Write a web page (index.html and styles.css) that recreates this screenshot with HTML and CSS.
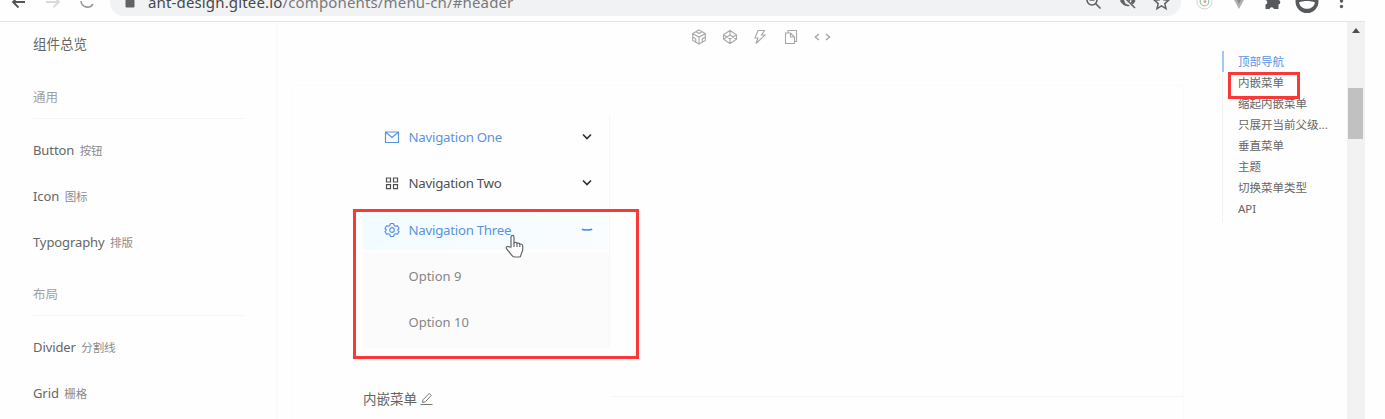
FILE: index.html
```html
<!DOCTYPE html>
<html lang="zh-CN">
<head>
<meta charset="utf-8">
<title>Menu - Ant Design</title>
<link rel="stylesheet" href="styles.css">
</head>
<body>
<div class="window">
  <header class="toolbar">
    <svg class="nav-icons" width="110" height="21" viewBox="0 0 110 21" fill="none">
      <path d="M25 2H13M19 -4l-6 6 5.500 5.500" stroke="#555" stroke-width="1.800"/>
      <path d="M46 2h12M53 -4l6 6-5.500 5" stroke="#d9dadb" stroke-width="1.800"/>
      <path d="M81 1a6.500 6.500 0 0 0 12 3" stroke="#999" stroke-width="1.600"/>
    </svg>
    <div class="address">
      <svg class="lock" width="10" height="21" viewBox="0 0 10 21"><rect x="0.500" y="-2" width="9" height="9.500" rx="1" fill="#606266"/></svg>
      <span class="url"><span class="host">ant-design.gitee.io</span>/components/menu-cn/#header</span>
      <svg class="address-icons" width="90" height="21" viewBox="0 0 90 21" fill="none" stroke="#606266">
        <circle cx="9" cy="0" r="5" stroke-width="1.600"/><path d="M12.500 3.500l5 5M6.500 0h5" stroke-width="1.700"/>
        <path d="M37 1c4-6 12-6 15.500 0-3.500 7-11.500 7-15.500 0z" fill="#606266" stroke="none"/><circle cx="45" cy="1" r="2.800" stroke="#f1f2f4" stroke-width="1.200"/><path d="M38 -5l13 13" stroke="#f1f2f4" stroke-width="3"/><path d="M38 -6l14 14" stroke-width="1.500"/>
        <path d="M78.500 -5l2.100 4.700 5 .5-3.800 3.400 1.200 5-4.500-2.700L74 8.600l1.200-5-3.800-3.400 5-.5z" stroke-width="1.500"/>
      </svg>
    </div>
    <svg class="extensions" width="172" height="21" viewBox="0 0 172 21" fill="none">
      <circle cx="23.500" cy="1.500" r="7.500" stroke="#cfd8d3"/><circle cx="23.500" cy="1.500" r="4.300" stroke="#a9c9b4" stroke-width="1.300"/><circle cx="24" cy="1.500" r="1.500" fill="#d7b0a3"/>
      <path d="M52 -2h12l-6 11z" fill="#b0b0b0"/><path d="M55 -2h6l-3 6z" fill="#888"/>
      <path d="M84.500 -3h13v3a2.300 2.300 0 0 1 0 4.500V9h-4.500a2.300 2.300 0 0 0-4.500 0h-4V4.500a2.300 2.300 0 0 0 0-4.500z" fill="#58595c"/>
      <circle cx="126" cy="1.500" r="11.500" fill="#58595c"/><path d="M118 2.500c4-2 12-2 16 0-1 4.500-4.500 6.300-8 6.300s-7-1.800-8-6.300z" fill="#fff"/>
      <circle cx="160.500" cy="1" r="1.700" fill="#58595c"/><circle cx="160.500" cy="6.500" r="1.700" fill="#58595c"/>
    </svg>
  </header>

  <div class="page">
    <aside class="sidebar">
      <div class="overview">组件总览</div>
      <div class="group">通用</div>
      <div class="item">Button<small>按钮</small></div>
      <div class="item">Icon<small>图标</small></div>
      <div class="item">Typography<small>排版</small></div>
      <div class="group group-second">布局</div>
      <div class="item">Divider<small>分割线</small></div>
      <div class="item">Grid<small>栅格</small></div>
    </aside>

    <main class="content">
      <div class="demo-actions">
        <svg width="16" height="16" viewBox="0 0 16 16"><path d="M8 1l6.300 3.500v7L8 15l-6.300-3.500v-7zM2 4.700L8 8l6-3.300M8 8v7M5 2.700L8 4.500l3-1.800M1.700 8l3 1.800V13M14.300 8l-3 1.800V13"/></svg>
        <svg width="16" height="16" viewBox="0 0 16 16"><path d="M8 1.500l6.500 4.300v4.400L8 14.500l-6.500-4.300V5.800zM1.500 5.800L8 10l6.500-4.200M1.500 10.200L8 6l6.500 4.200M8 1.500V6M8 10v4.500"/></svg>
        <svg width="16" height="16" viewBox="0 0 16 16"><path d="M6 1.500h6.500L9.500 6H13L4 14.500 6 9H3z"/></svg>
        <svg width="16" height="16" viewBox="0 0 16 16"><path d="M5 4V1.500h8.500v11h-2.300M2.500 4h5l4 4v6.500h-9zM7.500 4v4h4"/></svg>
        <svg width="18" height="16" viewBox="0 0 18 16"><path d="M5.800 5L2.300 8l3.500 3M13 5l3.500 3-3.500 3" stroke-width="1.500"/></svg>
      </div>

      <section class="demo">
        <nav class="menu">
          <div class="menu-title active">
            <svg width="16" height="16" viewBox="0 0 16 16"><path d="M1.500 3h13v10.500h-13zM2 3.500l6 5 6-5"/></svg>
            <span>Navigation One</span>
            <svg class="arrow" width="12" height="12" viewBox="0 0 12 12"><path d="M2 3.500l4 4 4-4"/></svg>
          </div>
          <div class="menu-title">
            <svg width="16" height="16" viewBox="0 0 16 16"><path d="M2.500 3h4v4h-4zM9.500 3h4v4h-4zM2.500 9.700h4v4h-4zM9.500 9.700h4v4h-4z"/></svg>
            <span>Navigation Two</span>
            <svg class="arrow" width="12" height="12" viewBox="0 0 12 12"><path d="M2 3.500l4 4 4-4"/></svg>
          </div>
          <div class="menu-title active hovered">
            <svg width="16" height="16" viewBox="0 0 16 16"><path d="M6.500 1.500h3l.7 2 1.300.7 2-.4 1.500 2.600L13.700 8l1.300 1.600-1.500 2.600-2-.4-1.300.7-.7 2h-3l-.7-2-1.300-.7-2 .4L1 9.600 2.300 8 1 6.400l1.500-2.600 2 .4 1.300-.7z"/><circle cx="8" cy="8" r="2.300"/></svg>
            <span>Navigation Three</span>
            <svg class="arrow" width="12" height="12" viewBox="0 0 12 12"><path d="M.8 5.200q5.200 1.600 10.400 0"/></svg>
          </div>
          <div class="submenu">
            <div class="option">Option 9</div>
            <div class="option">Option 10</div>
          </div>
        </nav>
        <div class="demo-title">
          <span>内嵌菜单</span>
          <svg width="13" height="14" viewBox="0 0 13 14"><path d="M2.500 10.500l.5-2.800L9.200 1.500l2 2L5.300 9.800zM.5 12.500h12"/></svg>
          <i></i>
        </div>
      </section>
    </main>

    <nav class="anchors">
      <a class="current">顶部导航</a>
      <a>内嵌菜单</a>
      <a>缩起内嵌菜单</a>
      <a>只展开当前父级...</a>
      <a>垂直菜单</a>
      <a>主题</a>
      <a>切换菜单类型</a>
      <a>API</a>
    </nav>

    <div class="scrollbar"><div class="up"></div><div class="thumb"></div></div>
  </div>

  <div class="mark mark-menu"></div>
  <div class="mark mark-anchor"></div>
  <svg class="cursor" width="20" height="25" viewBox="0 0 20 25"><path d="M6 13V3.300c0-2.500 3-2.500 3 0V9c1-1.200 2.700-.7 3 .5 1-.8 2.500-.4 2.800.8 1.200-.7 2.900 0 2.900 1.600v3.600c0 2.200-1.500 3.200-1.800 5.800-.2 1.200-1 1.700-2 1.700H9.500c-1.300 0-2-.6-2.700-1.700L1.500 14.700c-.9-1.900 1-3 2.500-1.800zM9 9v4M12 9.500V13M14.800 10.300V13"/></svg>
</div>
</body>
</html>
```
FILE: styles.css
```css
* { box-sizing: border-box; }
body {
  margin: 0;
  overflow: hidden;
  background: #fefefe;
  font-family: "Noto Sans", "Noto Sans CJK SC", sans-serif;
  font-size: 13px;
  color: #666;
}
svg { display: block; flex: none; }
.window {
  position: relative;
  width: 1385px;
  height: 419px;
  overflow: hidden;
  display: flex;
  flex-direction: column;
}
.toolbar {
  display: flex;
  width: 1365px;
  height: 22px;
  flex: none;
  border-bottom: 1px solid #e2e5e7;
}
.address {
  display: flex;
  width: 1071px;
  height: 16px;
  border-radius: 0 0 14px 14px;
  background: #f1f2f4;
}
.lock { margin-left: 15px; }
.url {
  margin: -8px 0 0 13px;
  line-height: 20px;
  font-size: 15px;
  letter-spacing: .15px;
  color: #77797c;
  white-space: nowrap;
}
.host { color: #46484b; }
.address-icons { margin-left: auto; margin-right: 8px; }
.page { display: flex; flex: 1; min-height: 0; }
.sidebar {
  width: 278px;
  flex: none;
  padding-left: 33px;
  border-right: 2px solid #fafafa;
}
.overview { margin-top: 12px; height: 20px; line-height: 20px; font-size: 13.5px; }
.group {
  width: 211px;
  margin: 34px 0 9px;
  height: 31px;
  line-height: 20px;
  font-size: 12.5px;
  color: #a0a0a0;
  border-bottom: 1px solid #f5f5f5;
}
.group.group-second { margin: 19px 0 9px; }
.item { height: 46px; line-height: 45px; color: #666; letter-spacing: -.1px; }
.item small { margin-left: 5.500px; font-size: 11.5px; color: #8c8c8c; }
.content { width: 945px; flex: none; }
.demo-actions {
  display: flex;
  gap: 14.500px;
  padding: 7px 0 0 413px;
  height: 63px;
}
.demo-actions svg { fill: none; stroke: #a8a8a8; stroke-width: 1.100; }
.demo {
  width: 892px;
  height: 340px;
  margin-left: 14px;
  padding: 28px 0 0 70px;
  border: 1px solid #fbfbfb;
}
.menu { width: 247px; border-right: 1px solid #f6f6f6; }
.menu-title {
  display: flex;
  align-items: center;
  height: 46.300px;
  padding: 0 16.500px 0 21px;
  font-size: 13.300px;
  letter-spacing: -.28px;
  color: #505050;
}
.menu-title svg { fill: none; stroke: currentColor; stroke-width: 1.200; }
.menu-title span { margin-left: 8.500px; }
.menu-title .arrow { margin-left: auto; stroke: #333; stroke-width: 1.700; }
.menu-title.active { color: #5b93df; }
.menu-title.hovered { height: 40px; margin: 3px 0; background: linear-gradient(90deg, #f2fbff, #fafdff); }
.menu-title.hovered .arrow { stroke: #4a90e2; }
.submenu { height: 95px; padding-left: 45.500px; background: #fbfbfb; }
.option { height: 46px; line-height: 47px; color: #868686; }
.demo-title { display: flex; align-items: center; margin-top: 41px; font-size: 13.500px; line-height: 20px; }
.demo-title svg { margin-left: 3px; fill: none; stroke: #777; stroke-width: 1; }
.demo-title i { width: 572px; height: 1px; margin: -4px 0 0 178px; background: #f5f5f5; }
.anchors {
  width: 125px;
  height: 170px;
  flex: none;
  margin: 30px 0 0 -1px;
  padding-left: 15px;
  border-left: 1px solid #f2f2f2;
  font-size: 11.500px;
}
.anchors a { display: block; height: 21px; line-height: 21px; white-space: nowrap; }
.anchors .current {
  margin: -1px 0 0 -16px;
  padding-left: 14px;
  color: #5b93e8;
  border-left: 2px solid #a5c5f2;
}
.scrollbar { width: 18px; background: #f2f2f3; flex: none; }
.up {
  width: 8px;
  height: 5px;
  margin: 6px 0 0 5px;
  background: #505050;
  clip-path: polygon(50% 0, 100% 100%, 0 100%);
}
.thumb { width: 15px; height: 51px; margin: 55px 0 0 1px; background: #c1c1c1; }
.mark { position: absolute; border: 3px solid #fb3838; }
.mark-menu { left: 353px; top: 209px; width: 286px; height: 150px; }
.mark-anchor { left: 1228px; top: 72px; width: 72px; height: 27px; }
.cursor {
  position: absolute;
  left: 505px;
  top: 234px;
  fill: #fff;
  stroke: #666;
  stroke-width: 1.200;
}
```
